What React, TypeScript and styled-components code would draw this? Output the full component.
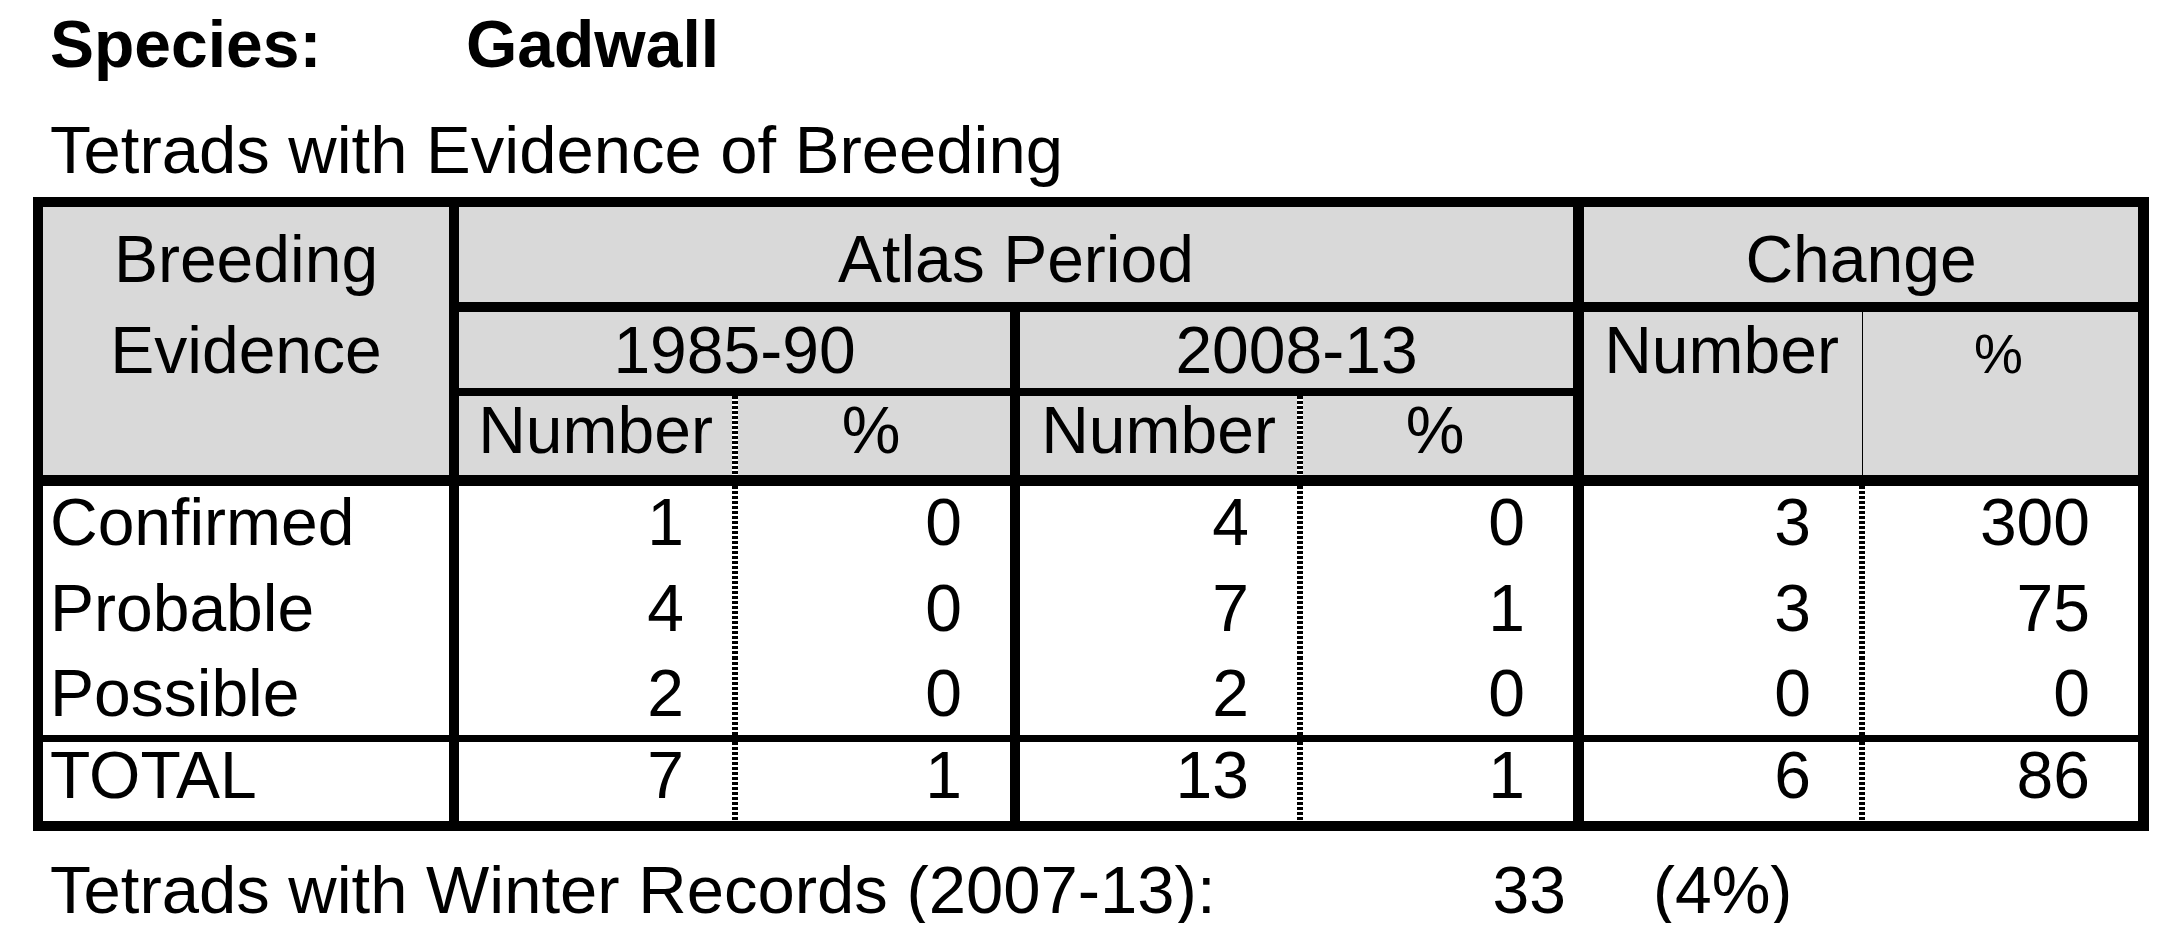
import React from 'react';
import styled, { createGlobalStyle, css } from 'styled-components';

const GlobalStyle = createGlobalStyle`
  html, body { margin: 0; padding: 0; background: #fff; }
  body { font-family: "Liberation Sans", Arial, sans-serif; color: #000; }
`;

const Page = styled.div`
  padding: 11px 0 0 33px;
  width: 2176px;
  box-sizing: border-box;
`;

const TitleLine = styled.div<{ $bold?: boolean; $mt: number; $size: number }>`
  margin: ${(p) => p.$mt}px 0 0 17px;
  display: flex;
  font-size: ${(p) => p.$size}px;
  line-height: 66px;
  font-weight: ${(p) => (p.$bold ? 700 : 400)};
  white-space: nowrap;
`;

const SpeciesLabel = styled.span`
  width: 416px;
`;

const Table = styled.div`
  margin-top: 14px;
  display: grid;
  grid-template-columns: 406px 283px 278px 287px 276px 286px 279px;
  grid-template-rows: 95px 86px 87px 96px 86px 78px 86px;
  width: 2116px;
  box-sizing: border-box;
  border: 10px solid #000;
  border-right-width: 11px;
  font-size: 66px;
  line-height: 66px;
`;

type Edge = 'none' | 'thick' | 'wide' | 'dotted' | 'thin';
type Align = 'left' | 'center' | 'right';

const edgeStyle = (edge: Edge) => {
  switch (edge) {
    case 'thick':
      return css`border-left: 10px solid #000;`;
    case 'wide':
      return css`border-left: 11px solid #000;`;
    case 'dotted':
      return css`
        background-image: repeating-linear-gradient(to bottom, #000 0 3px, #fff 3px 5px);
        background-size: 6px 100%;
        background-position: 0 0;
        background-repeat: no-repeat;
      `;
    case 'thin':
      return css`
        background-image: linear-gradient(#000, #000);
        background-size: 1px 100%;
        background-position: 3px 0;
        background-repeat: no-repeat;
      `;
    default:
      return css``;
  }
};

const Cell = styled.div<{
  $col: string;
  $row: string;
  $head?: boolean;
  $left?: Edge;
  $top?: number;
  $align?: Align;
  $pt?: number;
  $size?: number;
}>`
  grid-column: ${(p) => p.$col};
  grid-row: ${(p) => p.$row};
  box-sizing: border-box;
  min-width: 0;
  overflow: hidden;
  white-space: nowrap;
  background-color: ${(p) => (p.$head ? '#d9d9d9' : '#fff')};
  border-top: ${(p) => p.$top ?? 0}px solid #000;
  text-align: ${(p) => p.$align ?? 'center'};
  padding-top: ${(p) => p.$pt ?? 0}px;
  padding-left: ${(p) => (p.$align === 'left' ? 7 : 0)}px;
  padding-right: ${(p) => (p.$align === 'right' ? 48 : 0)}px;
  font-size: ${(p) => p.$size ?? 66}px;
  ${(p) => edgeStyle(p.$left ?? 'none')}
`;

const StackLine = styled.div<{ $gap: number }>`
  margin-top: ${(p) => p.$gap}px;
`;

const WinterRow = styled.div`
  margin: 26px 0 0 17px;
  display: flex;
  font-size: 66px;
  line-height: 66px;
  white-space: nowrap;
`;

const WinterLabel = styled.span`
  width: 1400px;
  font-size: 67px;
`;

const WinterCount = styled.span`
  width: 116px;
  text-align: right;
`;

const WinterShare = styled.span`
  margin-left: 87px;
`;

const dataEdges: Edge[] = ['thick', 'dotted', 'thick', 'dotted', 'wide', 'dotted'];

const rows = [
  { label: 'Confirmed', vals: ['1', '0', '4', '0', '3', '300'], row: 4, top: 11, pt: 3 },
  { label: 'Probable', vals: ['4', '0', '7', '1', '3', '75'], row: 5, top: 0, pt: 4 },
  { label: 'Possible', vals: ['2', '0', '2', '0', '0', '0'], row: 6, top: 0, pt: 3 },
  { label: 'TOTAL', vals: ['7', '1', '13', '1', '6', '86'], row: 7, top: 7, pt: 0 },
];

export default function App() {
  return (
    <>
      <GlobalStyle />
      <Page>
        <TitleLine $bold $mt={0} $size={66}>
          <SpeciesLabel>Species:</SpeciesLabel>
          <span>Gadwall</span>
        </TitleLine>
        <TitleLine $mt={40} $size={67}>Tetrads with Evidence of Breeding</TitleLine>
        <Table>
          <Cell $col="1" $row="1 / span 3" $head $pt={19}>
            <StackLine $gap={0}>Breeding</StackLine>
            <StackLine $gap={25}>Evidence</StackLine>
          </Cell>
          <Cell $col="2 / span 4" $row="1" $head $left="thick" $pt={19}>
            Atlas Period
          </Cell>
          <Cell $col="6 / span 2" $row="1" $head $left="wide" $pt={19}>
            Change
          </Cell>

          <Cell $col="2 / span 2" $row="2" $head $left="thick" $top={10} $pt={5}>
            1985-90
          </Cell>
          <Cell $col="4 / span 2" $row="2" $head $left="thick" $top={10} $pt={5}>
            2008-13
          </Cell>
          <Cell $col="6" $row="2 / span 2" $head $left="wide" $top={10} $pt={5}>
            Number
          </Cell>
          <Cell $col="7" $row="2 / span 2" $head $left="thin" $top={10} $pt={9} $size={55}>
            %
          </Cell>

          <Cell $col="2" $row="3" $head $left="thick" $top={8} $pt={1}>
            Number
          </Cell>
          <Cell $col="3" $row="3" $head $left="dotted" $top={8} $pt={1}>
            %
          </Cell>
          <Cell $col="4" $row="3" $head $left="thick" $top={8} $pt={1}>
            Number
          </Cell>
          <Cell $col="5" $row="3" $head $left="dotted" $top={8} $pt={1}>
            %
          </Cell>

          {rows.map((r) => (
            <React.Fragment key={r.label}>
              <Cell $col="1" $row={String(r.row)} $top={r.top} $align="left" $pt={r.pt}>
                {r.label}
              </Cell>
              {r.vals.map((v, i) => (
                <Cell
                  key={i}
                  $col={String(i + 2)}
                  $row={String(r.row)}
                  $top={r.top}
                  $left={dataEdges[i]}
                  $align="right"
                  $pt={r.pt}
                >
                  {v}
                </Cell>
              ))}
            </React.Fragment>
          ))}
        </Table>
        <WinterRow>
          <WinterLabel>Tetrads with Winter Records (2007-13):</WinterLabel>
          <WinterCount>33</WinterCount>
          <WinterShare>(4%)</WinterShare>
        </WinterRow>
      </Page>
    </>
  );
}
